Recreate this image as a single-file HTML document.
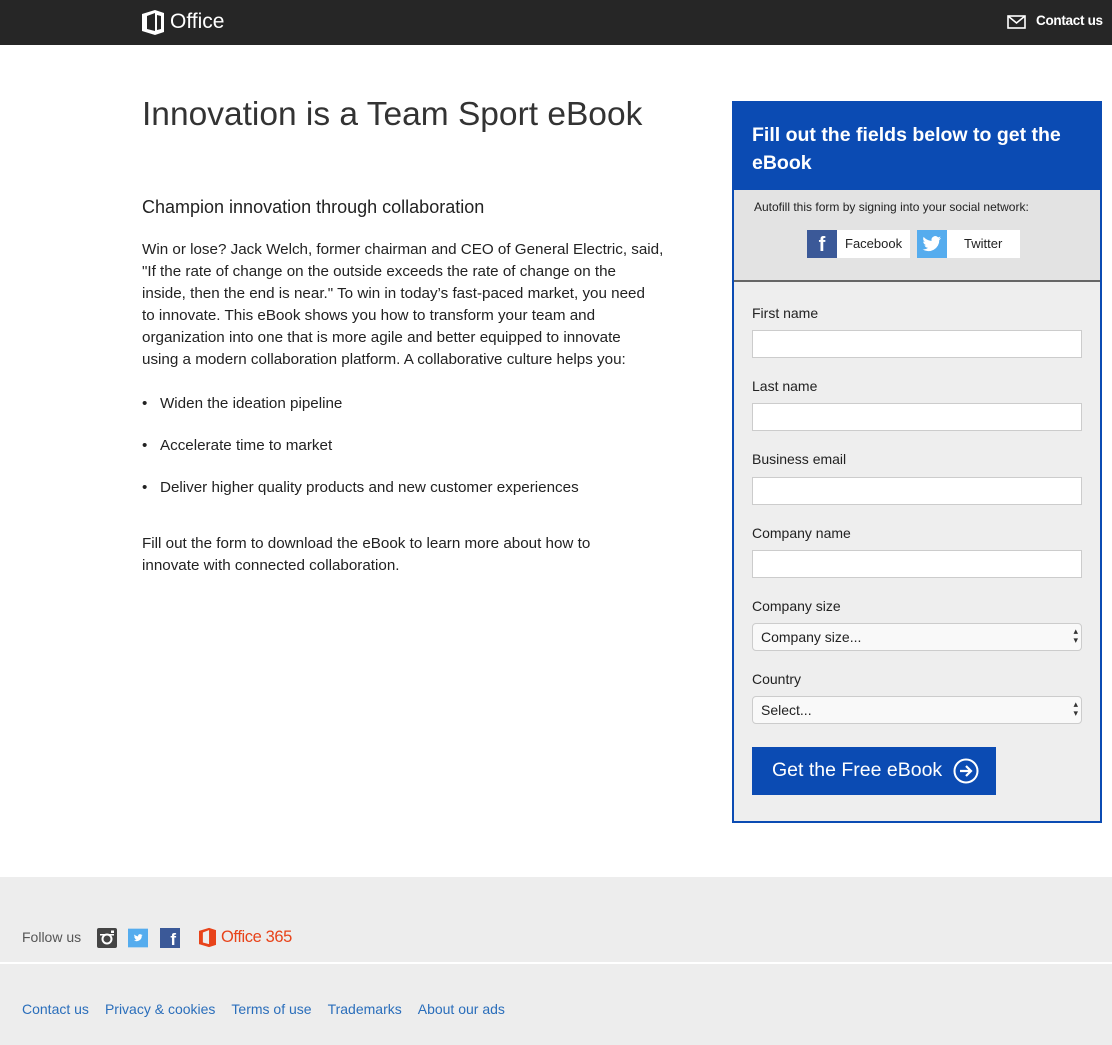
<!DOCTYPE html>
<html><head><meta charset="utf-8"><style>
*{margin:0;padding:0;box-sizing:border-box}
body{width:1112px;height:1045px;position:relative;font-family:"Liberation Sans",sans-serif;color:#222;background:#fff;overflow:hidden}
.a{position:absolute}
.hdr{left:0;top:0;width:1112px;height:45px;background:#262626}
.body p{font-size:15.2px;line-height:22px;white-space:nowrap}
.lbl{position:absolute;left:18px;font-size:14px;color:#222}
.inp{position:absolute;left:18px;width:330px;height:28px;background:#fff;border:1px solid #ccc}
.sel{position:absolute;left:18px;width:330px;height:28px;background:#f9f9f9;border:1px solid #ccc;border-radius:4px;font-size:14px;padding:5px 8px}
.sel:after{content:"▴\A▾";white-space:pre;position:absolute;right:3px;top:3px;font-size:9px;line-height:9px;color:#333}
.ft a{color:#2a6ebb;text-decoration:none;font-size:14px;margin-right:16px}
</style></head><body>
<div class="a hdr"></div>
<svg class="a" style="left:142px;top:10px" width="22" height="25" viewBox="0 0 22 25"><path d="M0 4 L13 0 L22 3 L22 22 L13 25 L0 21 Z M5 6 L5 19 L13 21 L13 3 Z M15 5 L15 20 L19 19 L19 6 Z" fill="#fff" fill-rule="evenodd"/></svg>
<div class="a" style="left:170px;top:10px;color:#fff;font-size:21px">Office</div>
<svg class="a" style="left:1007px;top:15px" width="19" height="14" viewBox="0 0 19 14"><rect x="1" y="1" width="17" height="12" fill="none" stroke="#fff" stroke-width="1.6"/><path d="M1 1 L9.5 8 L18 1" fill="none" stroke="#fff" stroke-width="1.6"/></svg>
<div class="a" style="left:1036px;top:13px;color:#fff;font-size:13.5px;font-weight:bold;letter-spacing:-0.3px">Contact us</div>

<div class="a" style="left:142px;top:96px;font-size:33.5px;color:#333">Innovation is a Team Sport eBook</div>
<div class="a" style="left:142px;top:197px;font-size:18px">Champion innovation through collaboration</div>
<div class="a body" style="left:142px;top:239px">
<p>Win or lose? Jack Welch, former chairman and CEO of General Electric, said,<br>"If the rate of change on the outside exceeds the rate of change on the<br>inside, then the end is near." To win in today’s fast-paced market, you need<br>to innovate. This eBook shows you how to transform your team and<br>organization into one that is more agile and better equipped to innovate<br>using a modern collaboration platform. A collaborative culture helps you:</p>
</div>
<div class="a" style="left:142px;top:383px;font-size:15.2px;line-height:42px">
<div>•&nbsp;&nbsp;&nbsp;Widen the ideation pipeline</div>
<div>•&nbsp;&nbsp;&nbsp;Accelerate time to market</div>
<div>•&nbsp;&nbsp;&nbsp;Deliver higher quality products and new customer experiences</div>
</div>
<div class="a body" style="left:142px;top:533px"><p>Fill out the form to download the eBook to learn more about how to<br>innovate with connected collaboration.</p></div>

<div class="a" style="left:732px;top:101px;width:370px;height:722px;border:2px solid #0b4bb3;background:#eeeeee">
 <div class="a" style="left:0;top:0;width:366px;height:87px;background:#0b4bb3;color:#fff;font-size:19.5px;font-weight:bold;line-height:28px;padding:18px 18px">Fill out the fields below to get the eBook</div>
 <div class="a" style="left:0;top:87px;width:366px;height:92px;background:#e3e3e3;border-bottom:2px solid #666"></div>
 <div class="a" style="left:20px;top:97px;font-size:12px">Autofill this form by signing into your social network:</div>
 <div class="a" style="left:73px;top:127px;width:103px;height:28px;background:#fff"><div class="a" style="left:0;top:0;width:30px;height:28px;background:#3b5998;color:#fff;font-weight:bold;font-size:20px;text-align:center;line-height:30px">f</div><div class="a" style="left:38px;top:6px;font-size:13px">Facebook</div></div>
 <div class="a" style="left:183px;top:127px;width:103px;height:28px;background:#fff"><div class="a" style="left:0;top:0;width:30px;height:28px;background:#55acee"><svg width="30" height="28" viewBox="0 0 30 28"><path d="M24 8c-.7.3-1.4.5-2.2.6.8-.5 1.4-1.2 1.7-2.1-.7.4-1.6.8-2.4.9a3.8 3.8 0 0 0-6.5 3.5C11.4 10.7 8.6 9.2 6.7 6.9c-1 1.8-.5 3.9 1.2 5-.6 0-1.2-.2-1.7-.5 0 1.8 1.3 3.4 3 3.7-.6.2-1.2.2-1.700.1.5 1.5 1.9 2.6 3.6 2.6A7.7 7.7 0 0 1 5.5 19.4 10.9 10.9 0 0 0 22.3 10c.7-.5 1.3-1.2 1.7-2z" fill="#fff"/></svg></div><div class="a" style="left:47px;top:6px;font-size:13px">Twitter</div></div>
 <div class="lbl" style="top:202px">First name</div><div class="inp" style="top:227px"></div>
 <div class="lbl" style="top:275px">Last name</div><div class="inp" style="top:300px"></div>
 <div class="lbl" style="top:348px">Business email</div><div class="inp" style="top:374px"></div>
 <div class="lbl" style="top:422px">Company name</div><div class="inp" style="top:447px"></div>
 <div class="lbl" style="top:495px">Company size</div><div class="sel" style="top:520px">Company size...</div>
 <div class="lbl" style="top:568px">Country</div><div class="sel" style="top:593px">Select...</div>
 <div class="a" style="left:18px;top:644px;width:244px;height:48px;background:#0b4bb3;color:#fff;font-size:19.5px;padding:12px 20px">Get the Free eBook
  <svg style="position:absolute;left:201px;top:11px" width="26" height="26" viewBox="0 0 26 26"><circle cx="13" cy="13" r="11.5" fill="none" stroke="#fff" stroke-width="2"/><path d="M7 13h11M13 8l5 5-5 5" fill="none" stroke="#fff" stroke-width="2.2"/></svg></div>
</div>

<div class="a" style="left:0;top:877px;width:1112px;height:168px;background:#ededed"></div>
<div class="a" style="left:0;top:962px;width:1112px;height:2px;background:#fff"></div>
<div class="a" style="left:22px;top:929px;font-size:14px;color:#555">Follow us</div>
<svg class="a" style="left:97px;top:928px" width="20" height="20" viewBox="0 0 20 20"><rect width="20" height="20" rx="2" fill="#444"/><circle cx="10" cy="11" r="4.5" fill="none" stroke="#fff" stroke-width="2"/><rect x="3" y="6" width="14" height="1.5" fill="#fff"/><rect x="14" y="2.5" width="3" height="2.5" fill="#fff"/></svg>
<svg class="a" style="left:128px;top:928px" width="20" height="20" viewBox="0 0 30 28"><rect width="30" height="28" fill="#55acee"/><path d="M24 8c-.7.3-1.4.5-2.2.6.8-.5 1.4-1.2 1.7-2.1-.7.4-1.6.8-2.4.9a3.8 3.8 0 0 0-6.5 3.5C11.4 10.7 8.6 9.2 6.7 6.9c-1 1.8-.5 3.9 1.2 5-.6 0-1.2-.2-1.7-.5 0 1.8 1.3 3.4 3 3.7-.6.2-1.2.2-1.7.1.5 1.5 1.9 2.6 3.6 2.6A7.7 7.7 0 0 1 5.5 19.4 10.9 10.9 0 0 0 22.3 10c.7-.5 1.3-1.2 1.7-2z" fill="#fff" transform="translate(5 4) scale(.7)"/></svg>
<div class="a" style="left:160px;top:928px;width:20px;height:20px;background:#3b5998;color:#fff;font-weight:bold;font-size:17px;text-align:right;padding-right:4px;line-height:24px">f</div>
<svg class="a" style="left:199px;top:927px" width="17" height="21" viewBox="0 0 22 25"><path d="M0 4 L13 0 L22 3 L22 22 L13 25 L0 21 Z M5 6 L5 19 L13 21 L13 3 Z" fill="#e8431a" fill-rule="evenodd"/></svg>
<div class="a" style="left:221px;top:928px;font-size:16.5px;color:#e8431a;letter-spacing:-0.4px">Office 365</div>
<div class="a ft" style="left:22px;top:1001px"><a>Contact us</a><a>Privacy &amp; cookies</a><a>Terms of use</a><a>Trademarks</a><a>About our ads</a></div>
</body></html>
